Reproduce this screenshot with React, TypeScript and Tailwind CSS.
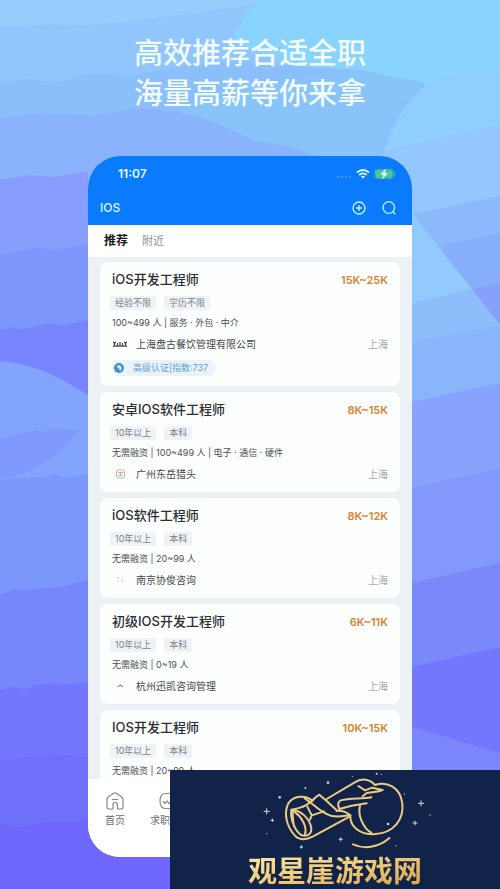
import React from 'react';

type Job = {
  title: string;
  salary: string;
  tags: string[];
  info: string;
  company?: string;
  city?: string;
  logo?: React.ReactNode;
  cert?: string;
};

const jobs: Job[] = [
  {
    title: 'iOS开发工程师',
    salary: '15K~25K',
    tags: ['经验不限', '学历不限'],
    info: '100~499 人 | 服务 · 外包 · 中介',
    company: '上海盘古餐饮管理有限公司',
    city: '上海',
    cert: '高级认证|指数:737',
    logo: (
      <path
        d="M1 6.5h3M2.5 6v4M5.5 7v3M8 6v4M10.5 7v3M13.5 6v4M1 10.2h14M12 6.5h3"
        fill="none"
        stroke="#4b4b52"
        strokeWidth="1.3"
      />
    ),
  },
  {
    title: '安卓IOS软件工程师',
    salary: '8K~15K',
    tags: ['10年以上', '本科'],
    info: '无需融资 | 100~499 人 | 电子 · 通信 · 硬件',
    company: '广州东岳猎头',
    city: '上海',
    logo: (
      <g fill="none" stroke="#cfaa9c" strokeWidth="1">
        <rect x="4.5" y="4" width="8" height="8" rx="2" />
        <path d="M6 6.5h5M6.5 9.5h4M8.5 6v4" />
      </g>
    ),
  },
  {
    title: 'iOS软件工程师',
    salary: '8K~12K',
    tags: ['10年以上', '本科'],
    info: '无需融资 | 20~99 人',
    company: '南京协俊咨询',
    city: '上海',
    logo: <path d="M5 6h2M5 9h2M9 6h1M9 9h3" stroke="#c9ccd2" strokeWidth="1" />,
  },
  {
    title: '初级IOS开发工程师',
    salary: '6K~11K',
    tags: ['10年以上', '本科'],
    info: '无需融资 | 0~19 人',
    company: '杭州迅凯咨询管理',
    city: '上海',
    logo: <path d="M5.5 9L8.5 7l2.5 2" fill="none" stroke="#8d9198" strokeWidth="1.2" />,
  },
  {
    title: 'IOS开发工程师',
    salary: '10K~15K',
    tags: ['10年以上', '本科'],
    info: '无需融资 | 20~99 人',
  },
];

const Backdrop: React.FC = () => (
  <svg
    className="absolute inset-0 h-full w-full"
    viewBox="0 0 500 889"
    preserveAspectRatio="none"
    aria-hidden="true"
  >
    <rect width="500" height="889" fill="#95cefd" />
    {/* left ridges */}
    <path d="M0 27L50 24L90 25L130 21L170 16L250 5L500 0V889H0Z" fill="#90c6fd" />
    <path d="M262 0H500V75L425 86L360 72L290 66L232 40L246 14Z" fill="#89d4fc" />
    <path d="M0 83L30 79L55 83L90 74L130 76L180 66L232 62L290 66L360 70L424 83L400 889H0Z" fill="#8bbffb" />
    <path d="M0 118L40 113L90 116L140 108L180 112L215 122L255 141L290 146L320 158V889H0Z" fill="#8ab3fb" />
    <path d="M180 112L200 94L260 84L360 71L424 83Q395 105 383 158H320L290 146L255 141L215 122Z" fill="#88c4f9" />
    <path d="M0 180L30 175L55 177L88 171V330H0Z" fill="#889efe" />
    <path d="M0 255L35 248L55 250L88 244V340H0Z" fill="#7c96fb" />
    <path d="M0 330L15 327L20 330L50 323L62 326L88 320V420H0Z" fill="#7884fb" />
    <path d="M0 361Q40 363 88 395V600H0Z" fill="#83a4fd" />
    <path d="M0 439L35 430L42 432L55 428L68 430L80 428Q52 467 12 477L0 478Z" fill="#7e98fb" />
    <path d="M0 480L15 478L45 477L55 474L65 478L88 474V600H0Z" fill="#7c97fb" />
    <path d="M0 595L15 589L26 590L60 587L88 580V889H0Z" fill="#7787fb" />
    <path d="M0 690L15 686L24 690L35 685L56 683L62 685L88 682V889H0Z" fill="#7277fd" />
    <path d="M0 762Q40 752 88 757V889H0Z" fill="#6f6ffa" />
    <path d="M0 822L15 828L50 821L70 822L88 818L500 830V889H0Z" fill="#6f67fb" />
    {/* right slopes */}
    <path d="M383 158Q392 115 424 86Q455 66 500 74V240H383Z" fill="#90cefd" />
    <path d="M383 156L390 149L500 125V240H383Z" fill="#93c7fd" />
    <path d="M400 217L500 196V400H400Z" fill="#8bb9fb" />
    <path d="M442 245L500 233V400H442Z" fill="#87aefb" />
    <path d="M470 290L500 283V400H470Z" fill="#87a1fb" />
    <path d="M412 213L500 325V410H412Z" fill="#92cafe" />
    <path d="M412 303L471 289L500 325V410H412Z" fill="#8dbdfb" />
    <path d="M412 343L495 326L500 327V420H412Z" fill="#89b5fb" />
    <path d="M412 402L500 383V500H412Z" fill="#87a3fe" />
    <path d="M412 488L500 468V600H412Z" fill="#8298fb" />
    <path d="M412 583L500 563V680H412Z" fill="#7b88fa" />
    <path d="M412 667L500 647V800H412Z" fill="#7277fd" />
    <path d="M412 727L500 753V889H412Z" fill="#7b86fb" />
  </svg>
);

const StatusBar: React.FC = () => (
  <div className="flex h-9 items-center justify-between pl-[30px] pr-4">
    <span className="text-xs font-semibold text-[#e6fbff]">11:07</span>
    <div className="flex items-center gap-1">
      <svg className="h-3 w-4" viewBox="0 0 16 12" aria-hidden="true">
        <path d="M1 9h14" stroke="#3b9bff" strokeWidth="1.5" strokeDasharray="2.5 1.5" />
      </svg>
      <svg className="h-3 w-3.5" viewBox="0 0 14 12" fill="none" stroke="#e9fdff" strokeWidth="1.8" aria-hidden="true">
        <path d="M1 4.5Q7 -0.5 13 4.5" />
        <path d="M3.2 7Q7 3.8 10.8 7" />
        <path d="M5 8.5Q7 7 9 8.5L7 10.8Z" fill="#e9fdff" stroke="none" />
      </svg>
      <svg className="h-3 w-[22px]" viewBox="0 0 22 12" aria-hidden="true">
        <rect x="0.5" y="1" width="19" height="10" rx="3" fill="#35b2b0" />
        <rect x="2" y="2.5" width="16" height="7" rx="2" fill="#45cc92" />
        <path d="M20.5 4.5v3" stroke="#4fb9c6" strokeWidth="1.5" />
        <path d="M12 0.5L6.5 6.5h3L8 11.5L14 5.3h-3Z" fill="#effff4" />
      </svg>
    </div>
  </div>
);

const JobCard: React.FC<{ job: Job }> = ({ job }) => (
  <li className="shrink-0 rounded-lg bg-[#fdfefe] px-[10px] pb-[10px] pt-[9px] last:flex-1 last:rounded-b-none">
    <div className="flex h-[18px] items-center justify-between px-0.5">
      <h2 className="text-[13px] font-medium text-[#2b2d33]">{job.title}</h2>
      <span className="text-[11px] font-semibold text-[#d9822f]">{job.salary}</span>
    </div>
    <div className="mt-[7px] flex h-3.5 gap-2">
      {job.tags.map((tag) => (
        <span key={tag} className="rounded-xs bg-[#eff3f6] px-[5px] text-[9px] leading-[14px] text-[#7b828a]">
          {tag}
        </span>
      ))}
    </div>
    <p className="mt-1.5 px-0.5 text-[9px] leading-[14px] text-[#4d5056]">{job.info}</p>
    {job.company && (
      <div className="mt-1.5 flex h-4 items-center gap-2 px-0.5">
        <svg className="h-4 w-4" viewBox="0 0 16 16" aria-hidden="true">
          {job.logo}
        </svg>
        <span className="flex-1 text-[10px] text-[#45484e]">{job.company}</span>
        <span className="text-[10px] text-[#a5a9af]">{job.city}</span>
      </div>
    )}
    {job.cert && (
      <div className="mt-2 flex px-0.5">
        <span className="flex h-4 items-center gap-2 rounded-full bg-[#eaf3fb] pl-px pr-2">
          <svg className="h-3 w-3" viewBox="0 0 12 12" aria-hidden="true">
            <circle cx="6" cy="6" r="5" fill="#3f93cf" />
            <path d="M3.5 4.5L6 3Q8.5 3.5 8.5 5.5Q8.5 8 7 9Q6.5 6 3.5 4.5Z" fill="#d9f0fb" />
          </svg>
          <span className="text-[9px] text-[#62a1d6]">{job.cert}</span>
        </span>
      </div>
    )}
  </li>
);

const Watermark: React.FC = () => (
  <div className="absolute bottom-0 right-0 flex h-[119px] w-[66%] flex-col items-center overflow-hidden bg-[#12234a]">
    <svg className="h-[84px] w-[330px] shrink-0" viewBox="0 15 990 252" fill="none" aria-hidden="true">
      <g stroke="#eccb83" strokeWidth="6" strokeLinecap="round" strokeLinejoin="round">
        <path d="M428 107C405 88 370 92 355 115C340 145 350 185 375 212C392 228 412 223 428 215L540 154" />
        <path d="M364 134C400 128 418 118 438 96L448 89L470 108L500 136" />
        <path d="M404 100C430 115 448 141 482 152C505 158 525 152 541 151" />
        <path d="M364 136C360 160 375 200 395 211C415 216 425 205 424 190C420 160 390 135 368 134C368 155 368 170 373 186" />
        <path d="M373 140C395 155 412 185 405 208" />
        <path d="M412 125L425 151L462 139M425 151L420 164" />
        <path d="M470 102L553 53C575 38 600 42 615 60C650 48 690 65 697 115C702 160 675 205 610 208C570 208 540 185 541 154" />
        <path d="M565 63L585 76L606 68L638 75C620 82 600 82 590 84L578 94" />
        <path d="M604 97C575 103 540 98 510 107C500 115 505 125 508 132L545 122L590 115" />
        <path d="M570 122C562 150 580 190 604 203" />
        <path d="M500 138C515 136 530 142 541 151" />
        <path d="M549 238C585 255 630 245 658 219" />
      </g>
      <g stroke="#d9dcd2" strokeWidth="3">
        <path d="M290 130v18M281 139h18M753 106v18M744 115h18M735 167v14M728 174h14M307 161v10M302 166h10M512 217v12M506 223h12M394 241v10M389 246h10" />
      </g>
      <g fill="#c9cfd2">
        <circle cx="329" cy="97" r="4" />
        <circle cx="406" cy="69" r="3" />
        <circle cx="474" cy="53" r="4" />
        <circle cx="547" cy="34" r="2" />
        <circle cx="620" cy="26" r="3" />
        <circle cx="634" cy="28" r="2" />
        <circle cx="654" cy="177" r="4" />
        <circle cx="703" cy="87" r="2" />
        <circle cx="780" cy="150" r="2" />
        <circle cx="678" cy="242" r="2" />
        <circle cx="290" cy="206" r="2" />
      </g>
    </svg>
    <strong className="bg-linear-to-br from-[#fbe9a8] via-[#efc873] to-[#d9a04e] bg-clip-text text-[29px] font-bold leading-[35px] whitespace-nowrap text-transparent">
      观星崖游戏网
    </strong>
  </div>
);

export default function App() {
  return (
    <main className="relative flex h-screen flex-col overflow-hidden px-[88px] pb-8 pt-[34px] font-[Inter,'Noto_Sans_CJK_SC',sans-serif]">
      <Backdrop />
      <h1 className="relative text-center text-[29px] font-medium leading-10 whitespace-nowrap text-[#f2fdff]">
        高效推荐合适全职
        <br />
        海量高薪等你来拿
      </h1>

      <div className="relative mt-[42px] flex min-h-0 flex-1 flex-col overflow-hidden rounded-[32px] bg-white">
        <header className="shrink-0 bg-[#0a7bff]">
          <StatusBar />
          <div className="flex h-[33px] items-center gap-4 pb-px pl-3 pr-4">
            <span className="flex-1 text-xs font-medium text-[#d9f8ff]">IOS</span>
            <button type="button" aria-label="添加">
              <svg className="h-3.5 w-3.5" viewBox="0 0 14 14" fill="none" stroke="#c4f5ff" strokeWidth="1.3">
                <circle cx="7" cy="7" r="6" />
                <path d="M7 4v6M4 7h6" />
              </svg>
            </button>
            <button type="button" aria-label="搜索">
              <svg className="h-3.5 w-3.5" viewBox="0 0 14 14" fill="none" stroke="#c4f5ff" strokeWidth="1.3">
                <circle cx="6.8" cy="6.5" r="5.8" />
                <path d="M10.8 10.8L13.3 13.3" />
              </svg>
            </button>
          </div>
        </header>

        <div className="flex h-8 shrink-0 items-center gap-3.5 bg-white px-4">
          <button type="button" className="text-xs font-bold text-[#17181b]">推荐</button>
          <button type="button" className="text-[11px] text-[#8c8f94]">附近</button>
        </div>

        <ul className="flex min-h-0 flex-1 flex-col gap-1.5 overflow-hidden bg-[#ecf1f6] px-3 pt-[5px]">
          {jobs.map((job) => (
            <JobCard key={job.title} job={job} />
          ))}
        </ul>

        <nav className="flex h-[78px] shrink-0 gap-6 bg-white px-4 pt-[13px] text-[#6a6d72]">
          <a href="#home" className="flex w-[22px] flex-col items-center">
            <svg className="h-[18px] w-[18px]" viewBox="0 0 18 18" fill="none" stroke="#85888d" strokeWidth="1.2" aria-hidden="true">
              <path d="M7 17H3Q1 17 1 15V7.5Q1 6 2.2 5L7.5 1.3Q9 0.5 10.5 1.3L15.8 5Q17 6 17 7.5V15Q17 17 15 17H11.5V13Q11.5 10.5 9 10.5Q7 10.5 7 13Z" />
              <path d="M6 7.5h6" />
            </svg>
            <span className="text-[10px] leading-5 whitespace-nowrap">首页</span>
          </a>
          <a href="#jobs" className="flex w-9 flex-col items-center">
            <svg className="h-[18px] w-[18px]" viewBox="0 0 18 18" fill="none" stroke="#85888d" strokeWidth="1.2" aria-hidden="true">
              <path d="M6 1.5H12Q17 2 17 9T12 16.5H6Q1 16 1 9T6 1.5Z" />
              <path d="M4 9.5L6 11.5L8 9L10 11.5L14 6.5" />
            </svg>
            <span className="self-start text-[10px] leading-5 whitespace-nowrap">求职</span>
          </a>
        </nav>
      </div>

      <Watermark />
    </main>
  );
}
